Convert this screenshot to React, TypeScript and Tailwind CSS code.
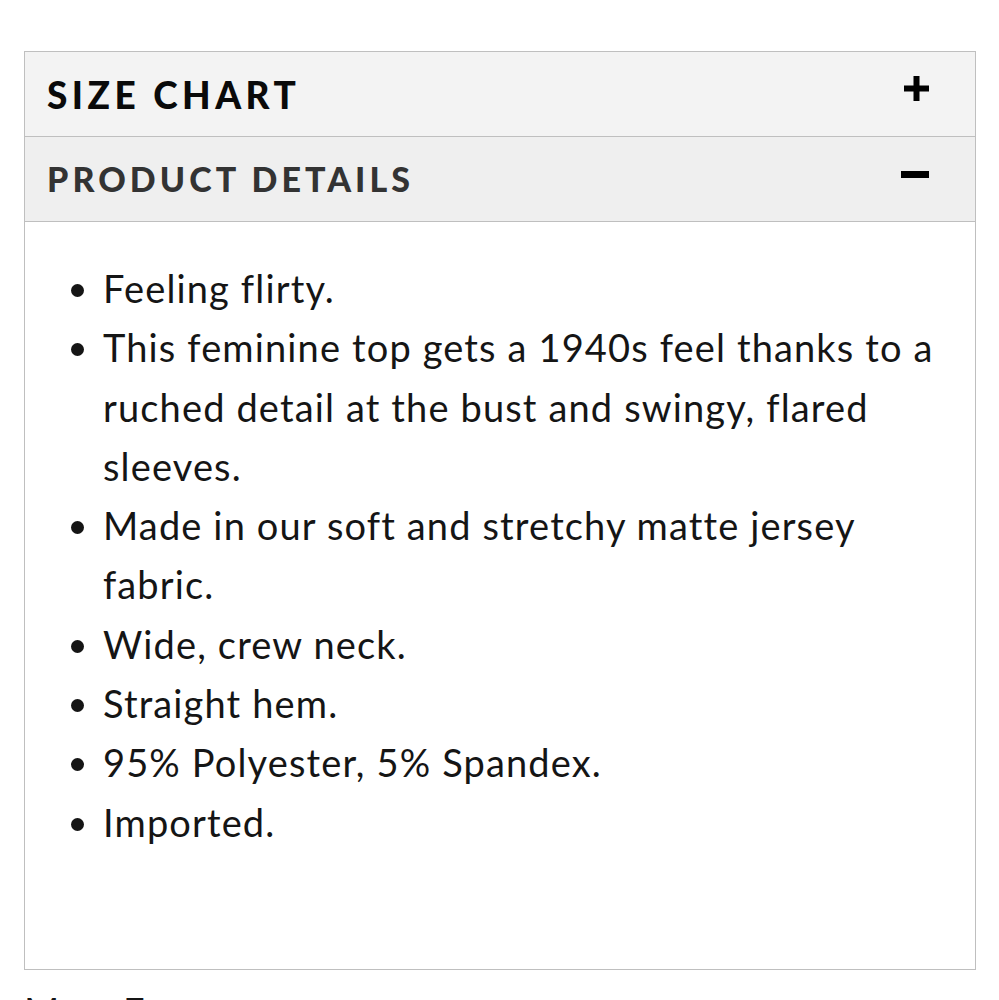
import React from "react";

const items = [
  "Feeling flirty.",
  "This feminine top gets a 1940s feel thanks to a ruched detail at the bust and swingy, flared sleeves.",
  "Made in our soft and stretchy matte jersey fabric.",
  "Wide, crew neck.",
  "Straight hem.",
  "95% Polyester, 5% Spandex.",
  "Imported.",
];

export default function App() {
  return (
    <div className="bg-white pt-[51px] pl-[24px] pr-[23px] font-['Lato',sans-serif] overflow-hidden h-[1000px]">
      <div className="border border-[#bfbfbf]">
        <div className="h-[85px] bg-[#f3f3f3] border-b border-[#bfbfbf] flex items-center justify-between pl-[22px] pr-[46px]">
          <span className="text-[37px] font-black tracking-[0.12em] text-[#0a0a0a] leading-none">SIZE CHART</span>
          <svg width="25" height="25" viewBox="0 0 25 25" className="-mt-[11px]">
            <rect x="9.5" y="0" width="6" height="25" fill="#000" />
            <rect x="0" y="9.5" width="25" height="6" fill="#000" />
          </svg>
        </div>
        <div className="h-[85px] bg-[#efefef] border-b border-[#bfbfbf] flex items-center justify-between pl-[22px] pr-[46px]">
          <span className="text-[34px] font-black tracking-[0.12em] text-[#333333] leading-none">PRODUCT DETAILS</span>
          <svg width="28" height="7" viewBox="0 0 28 7" className="-mt-[9px]">
            <rect x="0" y="0" width="28" height="7" fill="#000" />
          </svg>
        </div>
        <div className="h-[747px] pt-[37px] pl-[53px] pr-[25px]">
          <ul className="list-disc pl-[25px] text-[38px] tracking-[0.03em] leading-[59.3px] text-[#151515]">
            {items.map((t) => (
              <li key={t}>{t}</li>
            ))}
          </ul>
        </div>
      </div>
      <div className="pt-[22px] text-[38px] leading-none text-[#151515]">More From</div>
    </div>
  );
}
